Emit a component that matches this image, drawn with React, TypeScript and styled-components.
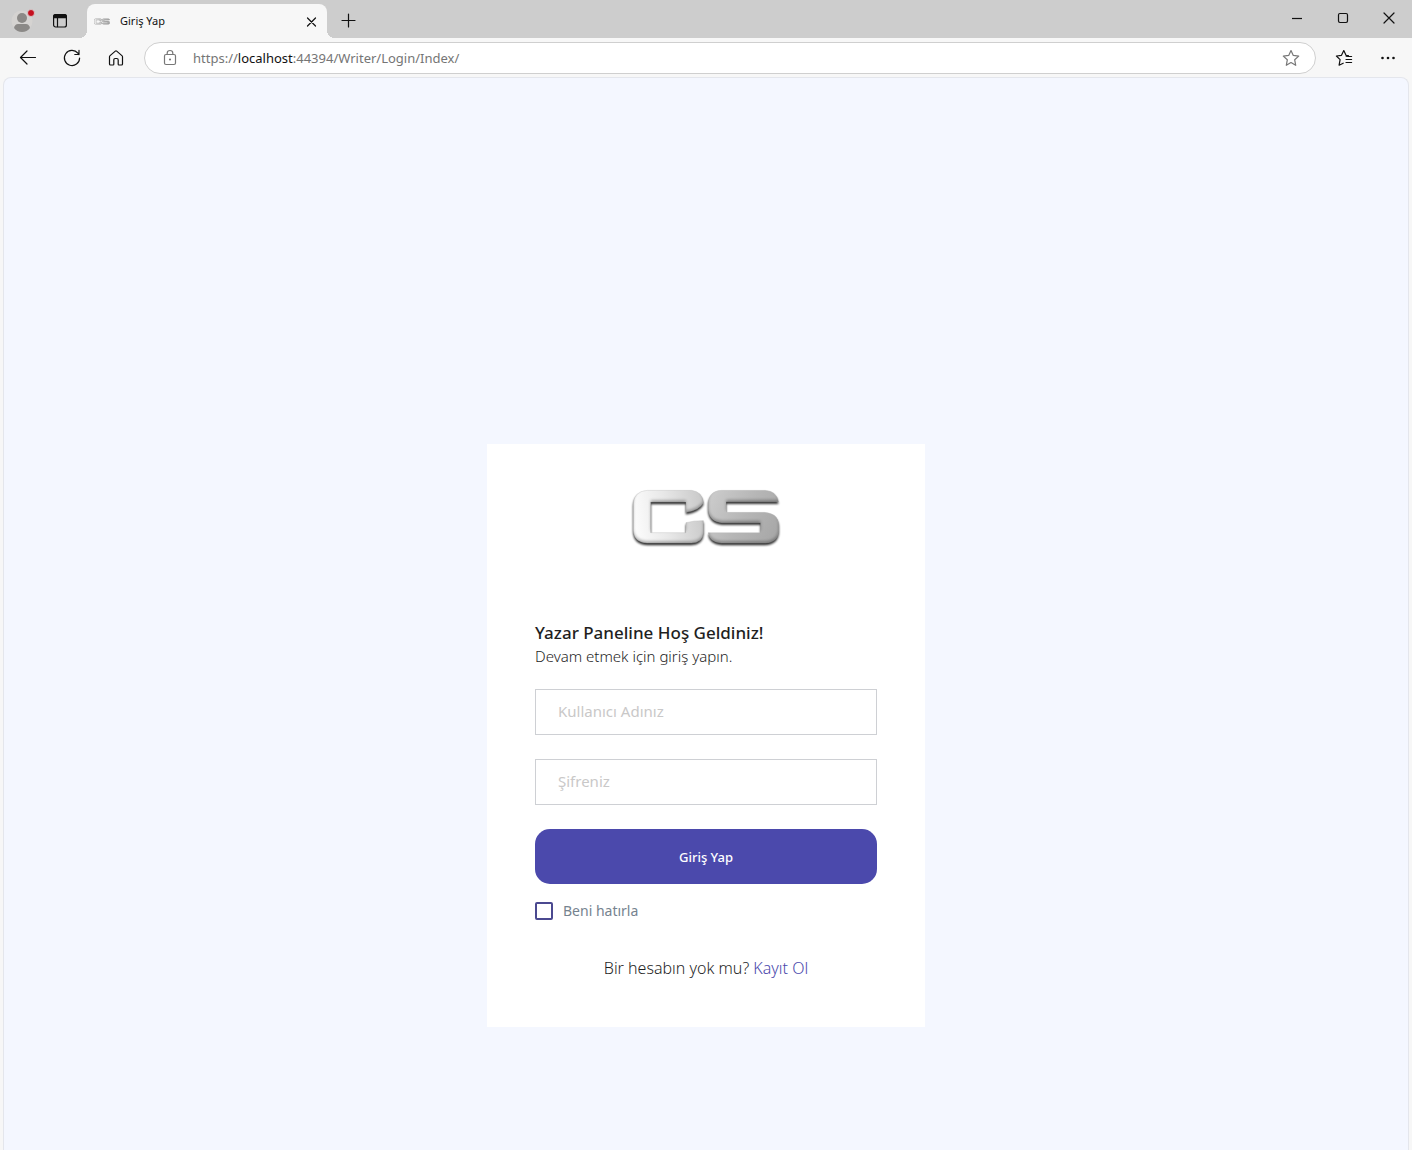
import React from "react";
import styled, { createGlobalStyle, css } from "styled-components";

const GlobalStyle = createGlobalStyle`
  *, *::before, *::after { box-sizing: border-box; }
  body { margin: 0; background: #f7f7f7; }
`;

const uiFont = '"Noto Sans", "Open Sans", sans-serif';
const bodyFont = '"Noto Sans", "Open Sans", sans-serif';

const Window = styled.div`
  display: flex;
  flex-direction: column;
  min-height: 100vh;
  font-family: ${uiFont};
`;

const TitleBar = styled.header`
  display: flex;
  align-items: flex-end;
  height: 38px;
  background: #cdcdcd;
`;

const IconButton = styled.button<{ $w?: number; $h?: number }>`
  display: flex;
  flex: none;
  align-items: center;
  justify-content: center;
  width: ${(p) => p.$w ?? 44}px;
  height: ${(p) => p.$h ?? 36}px;
  padding: 0;
  border: 0;
  background: transparent;
  color: #111;
`;

const ProfileTools = styled.div`
  display: flex;
  padding-left: 3px;
  width: 87px;
`;

const Tab = styled.div`
  position: relative;
  display: flex;
  align-items: center;
  width: 240px;
  height: 34px;
  padding-left: 7px;
  border-radius: 8px 8px 0 0;
  background: #f7f7f7;

  &::before,
  &::after {
    content: "";
    position: absolute;
    bottom: 0;
    width: 8px;
    height: 8px;
  }
  &::before {
    right: 100%;
    background: radial-gradient(circle at 0 0, transparent 8px, #f7f7f7 8px);
  }
  &::after {
    left: 100%;
    background: radial-gradient(circle at 100% 0, transparent 8px, #f7f7f7 8px);
  }
`;

const TabTitle = styled.span`
  flex: 1;
  padding-left: 10px;
  font-size: 11px;
  line-height: 16px;
  color: #111;
`;

const WindowControls = styled.div`
  display: flex;
  margin-left: auto;
`;

const Toolbar = styled.nav`
  display: flex;
  align-items: center;
  height: 39px;
  padding: 1px 2px 0 6px;
  background: #f7f7f7;
`;

const AddressBar = styled.div`
  display: flex;
  flex: 1;
  align-items: center;
  height: 32px;
  margin: 0 6px;
  padding: 0 2px 0 4px;
  border: 1px solid #cfcfcf;
  border-radius: 16px;
  background: #fff;
`;

const Address = styled.span`
  flex: 1;
  font-size: 13px;
  line-height: 20px;
  color: #757575;
  padding-left: 2px;

  b {
    font-weight: 400;
    color: #111;
  }
`;

const Page = styled.main`
  display: flex;
  flex: 1;
  align-items: flex-start;
  justify-content: center;
  margin: 0 3px;
  padding: 366px 16px 122px;
  border: 1px solid #e4e6ec;
  border-width: 1px 1px 0;
  border-radius: 8px 8px 0 0;
  background: #f4f7ff;
  font-family: ${bodyFont};
`;

const Card = styled.section`
  width: 100%;
  max-width: 438px;
  padding: 42px 48px 46px;
  background: #fff;
`;

const LogoBox = styled.div`
  display: flex;
  justify-content: center;
  height: 136px;
`;

const Heading = styled.h1`
  margin: 0;
  font-size: 17px;
  font-weight: 500;
  line-height: 22px;
  color: #1f1f1f;
`;

const Lead = styled.p`
  margin: 0 0 20px;
  font-size: 15px;
  font-weight: 300;
  line-height: 25px;
  color: #1f1f1f;
`;

const Form = styled.form`
  display: flex;
  flex-direction: column;
`;

const TextField = styled.input`
  width: 100%;
  height: 46px;
  margin-bottom: 24px;
  padding: 0 22px 2px;
  border: 1px solid #ced0d4;
  border-radius: 0;
  background: #fff;
  font: 400 15px/20px ${bodyFont};
  color: #1f1f1f;
  outline: 0;

  &::placeholder {
    color: #c9c8c8;
    opacity: 1;
  }
`;

const SubmitButton = styled.button`
  height: 55px;
  border: 0;
  border-radius: 15px;
  background: #4b49ac;
  font: 500 13px/20px ${bodyFont};
  color: #fff;
`;

const Remember = styled.label`
  display: flex;
  align-items: center;
  gap: 10px;
  height: 20px;
  margin-top: 17px;
  font-size: 14px;
  line-height: 20px;
  color: #76838f;
`;

const Checkbox = styled.input`
  appearance: none;
  width: 18px;
  height: 18px;
  margin: 0;
  border: 2px solid #4b4990;
  border-radius: 2px;
  background: #fff;

  &:checked {
    background: #4b49ac;
  }
`;

const SignUp = styled.p`
  margin: 34px 0 0;
  font-size: 16px;
  font-weight: 300;
  line-height: 26px;
  text-align: center;
  color: #1f1f1f;

  a {
    color: #4b49ac;
    text-decoration: none;
  }
`;

const C_SHAPE =
  "M112 61H244Q276 64 280 98Q268 121 228 127V96H122V188H228V158Q252 151 280 152V188Q278 218 244 219H112Q72 217 70 182V102Q72 64 112 61Z";
const S_SHAPE =
  "M334 61H466Q500 63 505 95H348V127H464Q504 130 506 164V184Q503 218 466 219H334Q298 216 295 188H452V158H336Q298 155 295 120V98Q298 63 334 61Z";

function Logo({ id, width, height, small }: { id: string; width: number; height: number; small?: boolean }) {
  return (
    <svg width={width} height={height} viewBox={small ? "62 50 454 180" : "48 48 480 210"} role="img" aria-label="CS">
      <defs>
        <linearGradient id={`${id}-c`} gradientUnits="userSpaceOnUse" x1="70" y1="140" x2="284" y2="110">
          <stop offset="0" stopColor="#fcfcfc" />
          <stop offset="0.45" stopColor="#e8e8e8" />
          <stop offset="1" stopColor="#c8c8c8" />
        </linearGradient>
        <linearGradient id={`${id}-s`} gradientUnits="userSpaceOnUse" x1="294" y1="80" x2="508" y2="200">
          <stop offset="0" stopColor="#cccccc" />
          <stop offset="0.5" stopColor="#b6b6b6" />
          <stop offset="1" stopColor="#a6a6a6" />
        </linearGradient>
        <filter id={`${id}-f`} x="-10%" y="-10%" width="120%" height="130%" colorInterpolationFilters="sRGB">
          <feGaussianBlur in="SourceAlpha" stdDeviation="3" result="soft" />
          <feOffset in="soft" dy="6" result="drop" />
          <feComponentTransfer in="drop" result="shadow">
            <feFuncA type="linear" slope="0.85" />
          </feComponentTransfer>
          <feOffset in="SourceAlpha" dy="-5" result="up" />
          <feGaussianBlur in="up" stdDeviation="4" result="upSoft" />
          <feComposite in="SourceAlpha" in2="upSoft" operator="out" result="edge" />
          <feComponentTransfer in="edge" result="bevel">
            <feFuncA type="linear" slope="0.3" />
          </feComponentTransfer>
          <feMerge>
            <feMergeNode in="shadow" />
            <feMergeNode in="SourceGraphic" />
            <feMergeNode in="bevel" />
          </feMerge>
        </filter>
      </defs>
      <g filter={small ? undefined : `url(#${id}-f)`} stroke={small ? "#8c8c8c" : "#c8c8c8"} strokeWidth={small ? 12 : 1}>
        <path d={C_SHAPE} fill={`url(#${id}-c)`} />
        <path d={S_SHAPE} fill={`url(#${id}-s)`} />
      </g>
    </svg>
  );
}

const stroke = css`
  fill: none;
  stroke: currentColor;
  stroke-width: 1.2;
  stroke-linecap: round;
  stroke-linejoin: round;
`;

const Icon = styled.svg<{ $muted?: boolean }>`
  ${stroke}
  width: 20px;
  height: 20px;
  color: ${(p) => (p.$muted ? "#777" : "#111")};
`;

const ProfileIcon = () => (
  <svg width="24" height="24" viewBox="0 0 24 24" aria-hidden="true">
    <circle cx="11" cy="13" r="10.5" fill="#d5d3d1" />
    <circle cx="11" cy="10" r="5" fill="#8b8987" />
    <path d="M3 20Q4 16 7 16H15Q18 16 19 20Q16 24 11 24T3 20Z" fill="#8b8987" />
    <circle cx="20" cy="5" r="3.5" fill="#c50f1f" stroke="#d9d9d9" strokeWidth="0.8" />
  </svg>
);

export default function App() {
  return (
    <>
      <GlobalStyle />
      <Window>
        <TitleBar>
          <ProfileTools>
            <IconButton $w={40} aria-label="Profil">
              <ProfileIcon />
            </IconButton>
            <IconButton $w={34} aria-label="Sekme eylemleri">
              <Icon viewBox="0 0 20 20">
                <rect x="3.6" y="4.6" width="12.8" height="12.4" rx="2" />
                <path d="M3.6 7.6V6.4Q3.8 4.6 5.6 4.6H14.4Q16.2 4.6 16.4 6.4V7.6Z" fill="currentColor" />
                <path d="M7.5 8V16.6" />
              </Icon>
            </IconButton>
          </ProfileTools>
          <Tab>
            <Logo id="tab" width={16} height={7} small />
            <TabTitle>Giriş Yap</TabTitle>
            <IconButton $w={32} $h={32} aria-label="Sekmeyi kapat">
              <Icon viewBox="0 0 20 20">
                <path d="M6.5 7L14.5 15M14.5 7L6.5 15" />
              </Icon>
            </IconButton>
          </Tab>
          <IconButton aria-label="Yeni sekme">
            <Icon viewBox="0 0 20 20">
              <path d="M3 10.5H16M9.5 4V17" />
            </Icon>
          </IconButton>
          <WindowControls>
            <IconButton $w={46} $h={38} aria-label="Simge durumuna küçült">
              <Icon viewBox="0 0 20 20">
                <path d="M5 9.5H15" strokeLinecap="butt" />
              </Icon>
            </IconButton>
            <IconButton $w={46} $h={38} aria-label="Ekranı kapla">
              <Icon viewBox="0 0 20 20">
                <rect x="5.5" y="4.5" width="9" height="9" rx="1.4" />
              </Icon>
            </IconButton>
            <IconButton $w={46} $h={38} aria-label="Kapat">
              <Icon viewBox="0 0 20 20">
                <path d="M5 4L15 14M15 4L5 14" />
              </Icon>
            </IconButton>
          </WindowControls>
        </TitleBar>

        <Toolbar>
          <IconButton aria-label="Geri">
            <Icon viewBox="0 0 20 20">
              <path d="M17.5 9.5H2.5M9 3L2.5 9.5L9 16" />
            </Icon>
          </IconButton>
          <IconButton aria-label="Yenile">
            <Icon viewBox="0 0 20 20">
              <path d="M17.6 10A7.6 7.6 0 1 1 15.9 5.2L17 6.5M17 2.4V6.5H12.8" />
            </Icon>
          </IconButton>
          <IconButton aria-label="Giriş sayfası">
            <Icon viewBox="0 0 20 20">
              <path d="M3.5 8.8Q3.5 8.1 4.1 7.6L9.3 3.1Q10 2.5 10.7 3.1L15.9 7.6Q16.5 8.1 16.5 8.8V16Q16.5 17 15.5 17H13Q12.2 17 12.2 16.2V12Q12.2 10.5 10.8 10.5H9.2Q7.8 10.5 7.8 12V16.2Q7.8 17 7 17H4.5Q3.5 17 3.5 16Z" />
            </Icon>
          </IconButton>
          <AddressBar>
            <IconButton $w={42} $h={30} aria-label="Site bilgileri">
              <Icon viewBox="0 0 20 20" $muted>
                <rect x="4.5" y="6.5" width="11" height="10" rx="1.5" />
                <path d="M7.2 6.5V5Q7.2 2.5 10 2.5T12.8 5V6.5" />
                <circle cx="10" cy="11.5" r="0.5" fill="currentColor" />
              </Icon>
            </IconButton>
            <Address>
              https://<b>localhost</b>:44394/Writer/Login/Index/
            </Address>
            <IconButton $h={30} aria-label="Sık kullanılanlara ekle">
              <Icon viewBox="0 0 20 20" $muted>
                <path d="M10 2.5L12.3 7.4L17.7 8.1L13.7 11.8L14.7 17.3L10 14.6L5.3 17.3L6.3 11.8L2.3 8.1L7.7 7.4Z" />
              </Icon>
            </IconButton>
          </AddressBar>
          <IconButton aria-label="Sık kullanılanlar">
            <Icon viewBox="0 0 20 20">
              <path d="M14.4 7.6L12 7.3L9.8 2.6L7.5 7.3L2.4 8L6.1 11.6L5.1 17.2L9.2 15.2M12.2 8.5H17.6M12 11.5H17.6M12 14.5H17.6" />
            </Icon>
          </IconButton>
          <IconButton aria-label="Ayarlar ve daha fazlası">
            <Icon viewBox="0 0 20 20">
              <g fill="currentColor" stroke="none">
                <circle cx="4.5" cy="10" r="1.3" />
                <circle cx="10" cy="10" r="1.3" />
                <circle cx="15.5" cy="10" r="1.3" />
              </g>
            </Icon>
          </IconButton>
        </Toolbar>

        <Page>
          <Card>
            <LogoBox>
              <Logo id="brand" width={160} height={70} />
            </LogoBox>
            <Heading>Yazar Paneline Hoş Geldiniz!</Heading>
            <Lead>Devam etmek için giriş yapın.</Lead>
            <Form onSubmit={(e) => e.preventDefault()}>
              <TextField type="text" placeholder="Kullanıcı Adınız" aria-label="Kullanıcı Adınız" />
              <TextField type="password" placeholder="Şifreniz" aria-label="Şifreniz" />
              <SubmitButton type="submit">Giriş Yap</SubmitButton>
              <Remember>
                <Checkbox type="checkbox" />
                Beni hatırla
              </Remember>
            </Form>
            <SignUp>
              Bir hesabın yok mu? <a href="#kayit">Kayıt Ol</a>
            </SignUp>
          </Card>
        </Page>
      </Window>
    </>
  );
}
